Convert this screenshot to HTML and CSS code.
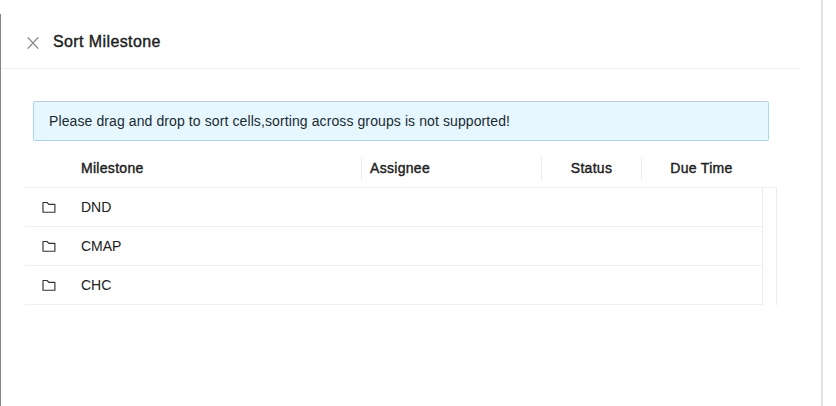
FILE: index.html
```html
<!DOCTYPE html>
<html lang="en">
<head>
<meta charset="utf-8">
<title>Sort Milestone</title>
<link rel="stylesheet" href="styles.css">
</head>
<body>
<svg class="defs" width="0" height="0" aria-hidden="true">
  <symbol id="folder" viewBox="0 0 14 12"><path d="M1 1.5H5L6.9 3.4H12.9V11.2H1Z" fill="none" stroke="#333" stroke-width="1.15" stroke-linejoin="round"/></symbol>
</svg>
<main class="drawer">
  <header class="header">
    <svg class="close" viewBox="0 0 12 12"><path d="M.7.3L11.3 11.7M11.3.3L.7 11.7" stroke="#858585" stroke-width="1.2" fill="none"/></svg>
    <h1 class="title">Sort Milestone</h1>
  </header>
  <div class="alert"><span class="alert-text">Please drag and drop to sort cells,sorting across groups is not supported!</span></div>
  <section class="table">
    <div class="thead">
      <div class="th name">Milestone</div>
      <div class="th assignee">Assignee</div>
      <div class="th status">Status</div>
      <div class="th due">Due Time</div>
    </div>
    <div class="body">
      <div class="rows">
        <div class="row"><svg class="folder"><use href="#folder"/></svg><span>DND</span></div>
        <div class="row"><svg class="folder"><use href="#folder"/></svg><span>CMAP</span></div>
        <div class="row"><svg class="folder"><use href="#folder"/></svg><span>CHC</span></div>
      </div>
      <div class="gutter"></div>
    </div>
  </section>
</main>
<div class="edge"></div>
</body>
</html>
```
FILE: styles.css
```css
* { box-sizing: border-box; }
body {
  margin: 0;
  display: flex;
  height: 406px;
  overflow: hidden;
  background: linear-gradient(#858585, #858585) 0 14px / 1px 392px no-repeat #fff;
  color: #202020;
  font: 14px/22px "Liberation Sans", Arial, sans-serif;
}
.defs { position: absolute; }
.drawer { width: 821px; padding-left: 1px; }
.edge { width: 2px; background: #e7e7e7; border-left: 1px solid #dedede; }
.header {
  display: flex;
  align-items: center;
  width: 799px;
  height: 69px;
  padding: 16px 0 0 26px;
  border-bottom: 1px solid #f0f0f0;
}
.close { width: 12px; height: 12px; margin-top: 2px; }
.title {
  margin: 0 0 0 14px;
  font-size: 16px;
  line-height: 22px;
  font-weight: 400;
  letter-spacing: .4px;
  -webkit-text-stroke: .4px #202020;
}
.alert {
  width: 736px;
  height: 40px;
  margin: 32px 0 0 32px;
  padding: 8px 15px;
  border: 1px solid #a9d8ec;
  border-top-color: #b9cfda;
  border-radius: 2px;
  background: #e6f7ff;
  color: #1b2a31;
  letter-spacing: .1px;
}
.table { width: 752px; margin: 8px 0 0 24px; }
.thead { display: flex; align-items: center; height: 39px; border-bottom: 1px solid #f0f0f0; }
.th { height: 23px; line-height: 23px; letter-spacing: .3px; -webkit-text-stroke: .4px #202020; }
.th + .th { border-left: 1px solid #ebebeb; }
.name { width: 336px; padding-left: 56px; }
.assignee { width: 180px; padding-left: 8px; }
.status { width: 100px; text-align: center; }
.due { width: 120px; text-align: center; }
.body { display: flex; }
.rows { width: 738px; border-right: 1px solid #ebebeb; }
.row { display: flex; align-items: center; height: 39px; padding-left: 17px; border-bottom: 1px solid #f0f0f0; }
.folder { width: 14px; height: 12px; margin-right: 25px; }
.gutter { width: 14px; border-right: 1px solid #ebebeb; }
```
